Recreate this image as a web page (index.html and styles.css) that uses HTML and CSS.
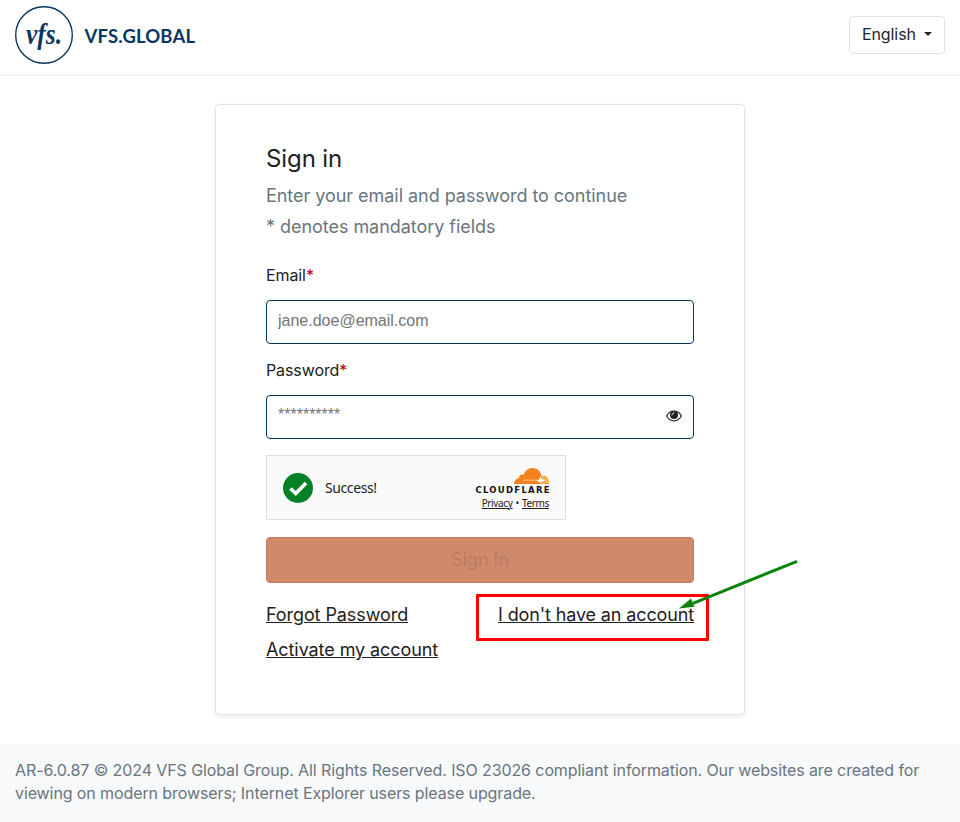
FILE: index.html
```html
<!DOCTYPE html>
<html lang="en">
<head>
<meta charset="utf-8">
<title>Sign in</title>
<link rel="stylesheet" href="styles.css">
</head>
<body>
<header class="topbar">
  <svg class="logo" width="190" height="60" viewBox="0 0 190 60" role="img" aria-label="VFS.GLOBAL">
    <circle cx="29" cy="30" r="28.3" class="logo-ring"/>
    <text x="11" y="39" class="logo-script" textLength="36" lengthAdjust="spacingAndGlyphs">vfs.</text>
    <text x="69.500" y="38" class="logo-name" textLength="110.500" lengthAdjust="spacing">VFS.GLOBAL</text>
  </svg>
  <button class="lang" type="button">English<span class="caret"></span></button>
</header>
<main class="main">
  <form class="card">
    <h1 class="title">Sign in</h1>
    <p class="lead">Enter your email and password to continue</p>
    <p class="lead">* denotes mandatory fields</p>
    <label class="label label-first" for="email">Email<span class="req">*</span></label>
    <input class="field" id="email" type="text" placeholder="jane.doe@email.com">
    <label class="label" for="password">Password<span class="req">*</span></label>
    <div class="field-wrap">
      <input class="field" id="password" type="password" placeholder="**********">
      <svg class="eye" width="16" height="12" viewBox="0 0 16 12">
        <path d="M.6 6C2.300 2.900 4.900 1.200 8 1.200S13.700 2.900 15.400 6C13.700 9.100 11.100 10.800 8 10.800S2.300 9.100.6 6Z" fill="#fff" stroke="#212529" stroke-width="1.200"/>
        <circle cx="8" cy="5" r="4" fill="#212529"/>
        <path d="M5.900 5Q6 3 8 2.800" fill="none" stroke="#fff" stroke-width=".8" stroke-linecap="round"/>
      </svg>
    </div>
    <div class="captcha">
      <svg width="30" height="30" viewBox="0 0 30 30">
        <circle cx="15" cy="15" r="15" fill="#038127"/>
        <path d="M7.500 15.500L12.800 20.500L23 10" fill="none" stroke="#fff" stroke-width="3.600"/>
      </svg>
      <span class="captcha-state">Success!</span>
      <div class="brand">
        <svg width="76" height="27" viewBox="0 0 76 27">
          <path d="M40 17C40.100 13.500 41.900 11.500 45 11.200C44.600 8.500 47 6.700 49.700 7.800C51 3.500 54.500 1 58.500 1C63 1 66.400 4 67.300 8C68.800 11 68 14 66.800 17Z" fill="#f6821f"/>
          <path d="M67 17L68.500 8.500C72.500 8 75.300 11.500 75 17Z" fill="#fbad41"/>
          <path d="M49 13.200H63" fill="none" stroke="#fbc999" stroke-width=".9"/>
          <path d="M61 13.800Q66 13.500 66.500 9Q67 13 73 13.800Q67 14 66 16.500Q65.500 14 61 13.800Z" fill="#fff"/>
          <text x="1.500" y="25.700" class="brand-name" textLength="74" lengthAdjust="spacing">CLOUDFLARE</text>
        </svg>
        <div class="terms"><a href="#">Privacy</a><span class="dot">•</span><a href="#">Terms</a></div>
      </div>
    </div>
    <button class="submit" type="button" disabled>Sign In</button>
    <div class="links">
      <a href="#">Forgot Password</a>
      <a class="register" href="#">I don't have an account</a>
    </div>
    <div class="links second"><a href="#">Activate my account</a></div>
    <div class="highlight"></div>
    <svg class="arrow" width="120" height="52" viewBox="0 0 120 52">
      <path d="M118 2.300L14 44.300" stroke="#0a830a" stroke-width="3"/>
      <path d="M0 49.500L12 39.500L15.500 47.700Z" fill="#0a830a"/>
    </svg>
  </form>
</main>
<footer class="footer">AR-6.0.87 © 2024 VFS Global Group. All Rights Reserved. ISO 23026 compliant information. Our websites are created for viewing on modern browsers; Internet Explorer users please upgrade.</footer>
</body>
</html>
```
FILE: styles.css
```css
* { box-sizing: border-box; }
body {
  margin: 0;
  min-height: 822px;
  font: 400 16px/24px Inter, sans-serif;
  color: #212121;
  background: #fff;
}
h1, p { margin: 0; }
a { color: inherit; text-decoration: underline; }
.topbar {
  height: 76px;
  padding: 5px 15px 10px;
  border-bottom: 2px solid #f3f3f3;
  display: flex;
  justify-content: space-between;
  align-items: flex-start;
}
.logo-ring { fill: none; stroke: #0a3761; stroke-width: 1.400; }
.logo-script { font: italic 700 29px "Liberation Serif", serif; fill: #0a3761; }
.logo-name { font: 700 18.500px Lato, sans-serif; fill: #0a3761; }
.lang {
  width: 96px;
  height: 38px;
  margin-top: 11px;
  padding: 0 12px 2px;
  border: 1px solid #dee2e9;
  border-radius: 4px;
  background: #fff;
  color: #212529;
  font: 400 16px/24px Inter, sans-serif;
  letter-spacing: -.1px;
  display: flex;
  align-items: center;
  justify-content: space-between;
}
.caret { border: 4px solid transparent; border-top-color: #212529; border-bottom: 0; }
.main { padding: 28px 215px 30px; }
.card {
  position: relative;
  height: 611px;
  padding: 38px 50px;
  border: 1px solid #dee2e9;
  border-radius: 4px;
  box-shadow: 0 2px 4px rgba(0, 30, 70, .09);
}
.title { font-size: 24px; font-weight: 400; line-height: 32px; margin-bottom: 5px; letter-spacing: -.1px; }
.lead { font-size: 18px; line-height: 31px; letter-spacing: -.04px; color: #69757f; }
.label { display: block; margin: 14px 0 13px; letter-spacing: -.1px; }
.label-first { margin-top: 21px; }
.req { color: #b50000; }
.field {
  display: block;
  width: 100%;
  height: 44px;
  padding: 0 11px 3px;
  border: 1px solid #05355d;
  border-radius: 4px;
  font: 16px "Liberation Sans", sans-serif;
}
#password { padding-bottom: 5px; }
.field::placeholder { color: #757575; }
.field-wrap { position: relative; }
.eye { position: absolute; right: 12px; top: 15px; }
.captcha {
  width: 300px;
  height: 65px;
  margin: 16px 0 17px;
  padding: 0 15px 0 16px;
  border: 1px solid #e0e0e0;
  background: #fafafa;
  display: flex;
  align-items: center;
}
.captcha-state { margin-left: 12px; font: 14px "Noto Sans", sans-serif; letter-spacing: -.4px; color: #232323; }
.brand { margin-left: auto; width: 76px; padding-top: 1px; }
.brand svg { display: block; }
.brand-name { font: 700 8.500px "DejaVu Sans", sans-serif; fill: #111; }
.terms { display: flex; justify-content: flex-end; font: 10px/14px "Noto Sans", sans-serif; letter-spacing: -.35px; margin: 2px 1px 0 0; }
.dot { margin: 0 3px; }
.submit {
  display: block;
  width: 100%;
  height: 46px;
  border: 1px solid #b87c65;
  border-radius: 4px;
  background: #d08a69;
  color: #b87c65;
  font: 400 18px/24px Inter, sans-serif;
}
.links { display: flex; justify-content: space-between; margin-top: 20px; font-size: 18px; line-height: 24px; letter-spacing: -.08px; }
.register { letter-spacing: -.13px; }
.second { margin-top: 11px; }
.highlight {
  position: absolute;
  left: 260px;
  top: 489px;
  width: 233px;
  height: 47px;
  border: 3px solid #f00;
  border-radius: 1px;
}
.arrow { position: absolute; left: 463px; top: 454px; }
.footer { height: 77px; padding: 14px 15px; background: #f8f9fa; color: #69757f; line-height: 23px; letter-spacing: -.1px; }
```
